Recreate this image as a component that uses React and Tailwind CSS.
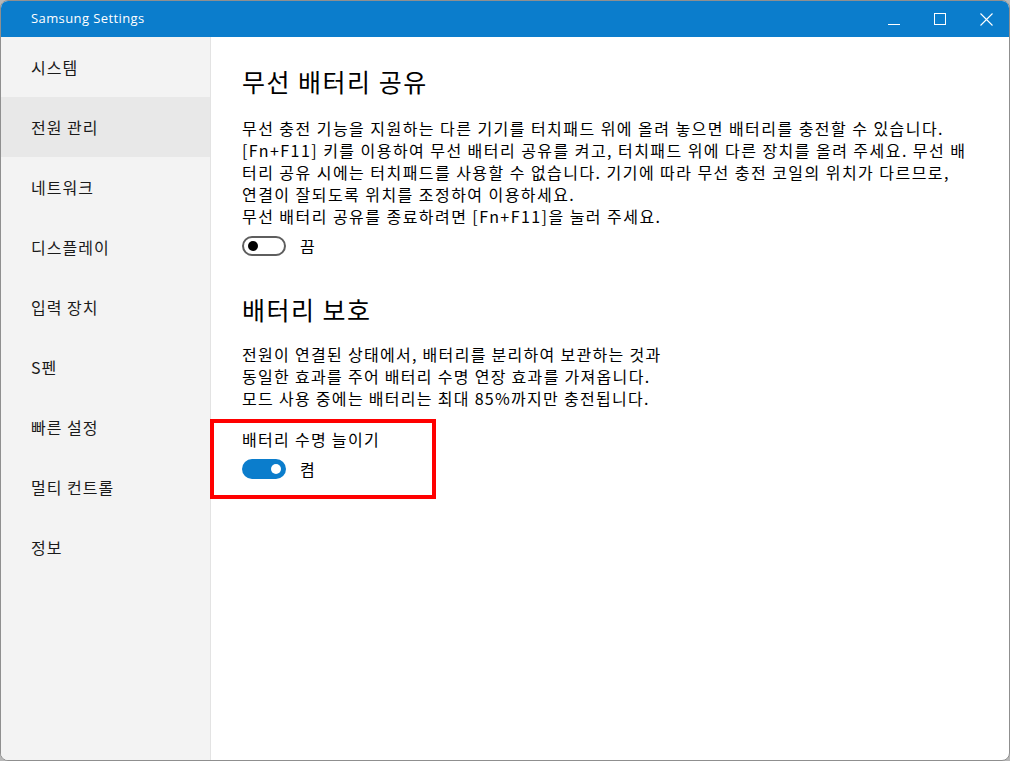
const navItems = ['시스템', '전원 관리', '네트워크', '디스플레이', '입력 장치', 'S펜', '빠른 설정', '멀티 컨트롤', '정보'];

const font = { fontFamily: '"Noto Sans CJK KR", "Noto Sans", sans-serif' };

function Toggle({ on }) {
  if (on) {
    return (
      <div className="flex h-[20px] w-[44px] items-center justify-end rounded-full bg-[#0b7dcc] pr-[5px]">
        <div className="h-[10px] w-[10px] rounded-full bg-white" />
      </div>
    );
  }
  return (
    <div className="flex h-[20px] w-[44px] items-center rounded-full border-2 border-[#5e5e5e] pl-[4px]">
      <div className="h-[10px] w-[10px] rounded-full bg-black" />
    </div>
  );
}

export default function App() {
  return (
    <div className="h-[761px] w-[1010px] bg-[#b8b8b8]" style={font}>
      <div className="flex h-full w-full flex-col overflow-hidden rounded-lg border border-[#8f8f8f] bg-white">
        {/* Title bar */}
        <div className="flex h-[36px] shrink-0 items-center bg-[#0b7dcc] text-white">
          <div className="pl-[30px] text-[13px] tracking-[0.4px]" style={{ fontFamily: '"Open Sans", "Noto Sans", sans-serif' }}>
            Samsung Settings
          </div>
          <div className="ml-auto flex items-center">
            <div className="flex h-[36px] w-[46px] items-center justify-center">
              <div className="mt-[10px] h-[1px] w-[12px] bg-white" />
            </div>
            <div className="flex h-[36px] w-[46px] items-center justify-center">
              <div className="h-[12px] w-[12px] border border-white" />
            </div>
            <div className="flex h-[36px] w-[46px] items-center justify-center">
              <svg width="13" height="13" viewBox="0 0 13 13" fill="none" stroke="white" strokeWidth="1.1">
                <path d="M0.5 0.5 L12.5 12.5 M12.5 0.5 L0.5 12.5" />
              </svg>
            </div>
          </div>
        </div>

        <div className="flex min-h-0 flex-1">
          {/* Sidebar */}
          <div className="w-[210px] shrink-0 border-r border-[#e3e3e3] bg-[#f3f3f3]">
            {navItems.map((item) => (
              <div
                key={item}
                className={
                  item === '전원 관리'
                    ? 'flex h-[60px] items-center bg-[#e8e8e8] pl-[30px] text-[16px] tracking-[1px] text-[#1a1a1a]'
                    : 'flex h-[60px] items-center pl-[30px] text-[16px] tracking-[1px] text-[#1a1a1a]'
                }
              >
                {item}
              </div>
            ))}
          </div>

          {/* Content */}
          <div className="flex-1 pl-[31px] pt-[28px] text-black">
            <div className="text-[25px] leading-[32px] tracking-[1.5px]">무선 배터리 공유</div>
            <div className="mt-[20px] text-[16px] leading-[22px] tracking-[1.45px]">
              <div className="whitespace-nowrap">무선 충전 기능을 지원하는 다른 기기를 터치패드 위에 올려 놓으면 배터리를 충전할 수 있습니다.</div>
              <div className="whitespace-nowrap">[Fn+F11] 키를 이용하여 무선 배터리 공유를 켜고, 터치패드 위에 다른 장치를 올려 주세요. 무선 배</div>
              <div className="whitespace-nowrap">터리 공유 시에는 터치패드를 사용할 수 없습니다. 기기에 따라 무선 충전 코일의 위치가 다르므로,</div>
              <div className="whitespace-nowrap">연결이 잘되도록 위치를 조정하여 이용하세요.</div>
              <div className="whitespace-nowrap">무선 배터리 공유를 종료하려면 [Fn+F11]을 눌러 주세요.</div>
            </div>
            <div className="mt-[7px] flex items-center gap-[14px]">
              <Toggle on={false} />
              <span className="text-[16px]">끔</span>
            </div>

            <div className="mt-[35px] text-[25px] leading-[32px] tracking-[1.5px]">배터리 보호</div>
            <div className="mt-[18px] text-[16px] leading-[22px] tracking-[1.3px]">
              <div className="whitespace-nowrap">전원이 연결된 상태에서, 배터리를 분리하여 보관하는 것과</div>
              <div className="whitespace-nowrap">동일한 효과를 주어 배터리 수명 연장 효과를 가져옵니다.</div>
              <div className="whitespace-nowrap">모드 사용 중에는 배터리는 최대 85%까지만 충전됩니다.</div>
            </div>

            <div className="-ml-[32px] mt-[10px] w-[226px] border-[4px] border-[#ff0000] pb-[14px] pl-[28px] pt-[5px]">
              <div className="text-[16px] leading-[22px] tracking-[1.3px]">배터리 수명 늘이기</div>
              <div className="mt-[7px] flex items-center gap-[14px]">
                <Toggle on={true} />
                <span className="text-[16px]">켬</span>
              </div>
            </div>
          </div>
        </div>
      </div>
    </div>
  );
}
